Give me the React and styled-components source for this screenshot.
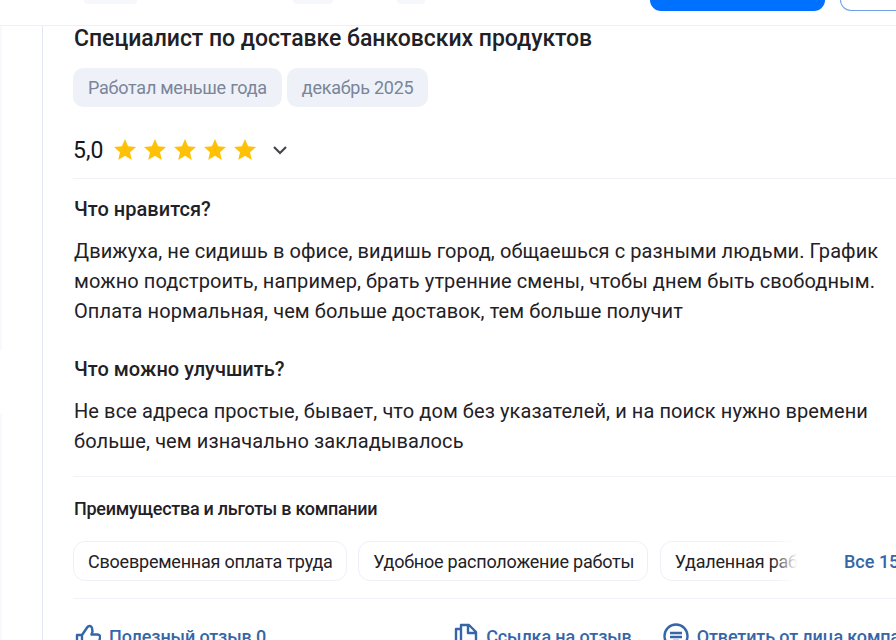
import React from 'react'
import styled, { createGlobalStyle } from 'styled-components'

const GlobalStyle = createGlobalStyle`
  html, body {
    margin: 0;
    padding: 0;
    height: 100%;
    overflow: hidden;
    background: #fff;
    font-family: Roboto, "Noto Sans", sans-serif;
  }
`

const Page = styled.div`
  width: 896px;
  height: 640px;
  overflow: hidden;
  display: flex;
  flex-direction: column;
`

const TopBar = styled.header`
  flex: none;
  height: 26px;
  box-sizing: border-box;
  border-bottom: 1px solid #eef0f8;
  display: flex;
  align-items: flex-start;
  padding-left: 84px;
`

const TabStub = styled.div`
  flex: none;
  width: ${p => p.$w}px;
  margin-left: ${p => p.$ml}px;
  height: 4px;
  background: #f6f7fb;
  border-radius: 0 0 8px 8px;
`

const PrimaryStub = styled.div`
  flex: none;
  width: 175px;
  height: 11px;
  margin-left: 225px;
  background: #0070ff;
  border-radius: 0 0 14px 14px;
`

const OutlineStub = styled.div`
  flex: none;
  width: 70px;
  height: 11px;
  margin-left: 15px;
  box-sizing: border-box;
  border: 1px solid #6f9fe8;
  border-top: 0;
  border-radius: 0 0 14px 14px;
`

const Body = styled.div`
  flex: 1;
  display: flex;
  min-height: 0;
`

const SideRail = styled.div`
  flex: none;
  width: 43px;
  box-sizing: border-box;
  border-right: 1px solid #e3e7f4;
  display: flex;
  flex-direction: column;
  gap: 62px;
`

const RailCard = styled.div`
  flex: none;
  width: 2px;
  height: ${p => p.$h}px;
  background: #f8f9fd;
  border-radius: 0 4px 4px 0;
`

const Card = styled.main`
  flex: none;
  width: 853px;
  box-sizing: border-box;
  padding: 0 0 0 30px;
`

const Title = styled.h2`
  margin: 0 0 0 1px;
  font-size: 23px;
  letter-spacing: -0.03px;
  line-height: 26px;
  font-weight: 500;
  color: #1f2126;
  white-space: nowrap;
`

const Tags = styled.div`
  display: flex;
  gap: 5px;
  margin-top: 16px;
`

const Tag = styled.span`
  height: 39px;
  box-sizing: border-box;
  padding: 0 15px;
  display: flex;
  align-items: center;
  font-size: 18px;
  letter-spacing: -0.25px;
  color: #7a8599;
  background: #eef1f8;
  border-radius: 10px;
`

const RatingRow = styled.div`
  display: flex;
  align-items: center;
  height: 28px;
  margin-top: 29px;
  padding-bottom: 14px;
  border-bottom: 1px solid #f1f2f8;
`

const Score = styled.span`
  flex: none;
  width: 41px;
  font-size: 23px;
  color: #14161a;
`

const Stars = styled.div`
  display: flex;
  gap: 8px;
`

const Chevron = styled.svg`
  margin-left: 16px;
`

const SectionTitle = styled.h3`
  margin: ${p => p.$mt}px 0 0 1px;
  font-size: 20px;
  letter-spacing: 0.03px;
  line-height: 26px;
  font-weight: 500;
  color: #1f2126;
`

const Paragraph = styled.p`
  margin: 14px 0 0 1px;
  font-size: 20px;
  letter-spacing: 0.09px;
  line-height: 30px;
  color: #1f2126;
  white-space: nowrap;
`

const Gap = styled.div`
  height: ${p => p.$h}px;
`

const Divider = styled.div`
  height: 1px;
  background: #f1f2f8;
`

const BenefitsTitle = styled.h4`
  margin: 21px 0 0 1px;
  font-size: 18px;
  letter-spacing: -0.28px;
  line-height: 21px;
  font-weight: 500;
  color: #1f2126;
`

const BenefitsRow = styled.div`
  display: flex;
  align-items: center;
  margin-top: 22px;
  height: 40px;
`

const ChipViewport = styled.div`
  width: 727px;
  flex: none;
  overflow: hidden;
  display: flex;
  gap: 11.5px;
  position: relative;
  &::after {
    content: '';
    position: absolute;
    top: 0;
    right: 0;
    bottom: 0;
    width: 28px;
    background: linear-gradient(to right, rgba(255, 255, 255, 0), #fff 90%);
  }
`

const Chip = styled.span`
  flex: none;
  height: 40px;
  box-sizing: border-box;
  padding: 1px 13px 0 14px;
  display: flex;
  align-items: center;
  font-size: 18px;
  letter-spacing: -0.22px;
  color: #1f2126;
  border: 1px solid #eef0f8;
  border-radius: 12px;
  white-space: nowrap;
`

const AllLink = styled.a`
  margin-left: 44px;
  font-size: 18px;
  font-weight: 500;
  color: #3566a8;
  white-space: nowrap;
`

const Actions = styled.div`
  display: flex;
  align-items: center;
  margin-top: 17px;
  padding-left: 2px;
  height: 40px;
`

const Action = styled.a`
  display: flex;
  align-items: center;
  flex: none;
  gap: ${p => p.$gap || 8}px;
  margin-left: ${p => p.$ml || 0}px;
  font-size: 18px;
  letter-spacing: -0.12px;
  font-weight: 500;
  color: #3566a8;
  white-space: nowrap;
`

function Star () {
  return (
    <svg width="22" height="22" viewBox="0 0 20 20">
      <path fill="#ffc107" d="M10 0L12.82 6.62 20 7.26 14.57 11.98 16.17 19 10 15.3 3.83 19 5.43 11.98 0 7.26 7.18 6.62z" />
    </svg>
  )
}

const benefits = ['Своевременная оплата труда', 'Удобное расположение работы', 'Удаленная работа']

export default function App () {
  return (
    <Page>
      <GlobalStyle />
      <TopBar>
        <TabStub $w={53} $ml={0} />
        <TabStub $w={40} $ml={156} />
        <TabStub $w={28} $ml={64} />
        <PrimaryStub />
        <OutlineStub />
      </TopBar>
      <Body>
        <SideRail>
          <RailCard $h={325} />
          <RailCard $h={300} />
        </SideRail>
        <Card>
          <Title>Специалист по доставке банковских продуктов</Title>
          <Tags>
            <Tag>Работал меньше года</Tag>
            <Tag>декабрь 2025</Tag>
          </Tags>
          <RatingRow>
            <Score>5,0</Score>
            <Stars>
              <Star /><Star /><Star /><Star /><Star />
            </Stars>
            <Chevron width="16" height="16" viewBox="0 0 16 16" fill="none" stroke="#44464c" strokeWidth="2.2">
              <path d="M2 5l6 6 6-6" />
            </Chevron>
          </RatingRow>
          <SectionTitle $mt={17}>Что нравится?</SectionTitle>
          <Paragraph>
            Движуха, не сидишь в офисе, видишь город, общаешься с разными людьми. График<br />
            можно подстроить, например, брать утренние смены, чтобы днем быть свободным.<br />
            Оплата нормальная, чем больше доставок, тем больше получит
          </Paragraph>
          <SectionTitle $mt={30}>Что можно улучшить?</SectionTitle>
          <Paragraph>
            Не все адреса простые, бывает, что дом без указателей, и на поиск нужно времени<br />
            больше, чем изначально закладывалось
          </Paragraph>
          <Gap $h={20} />
          <Divider />
          <BenefitsTitle>Преимущества и льготы в компании</BenefitsTitle>
          <BenefitsRow>
            <ChipViewport>
              {benefits.map(b => <Chip key={b}>{b}</Chip>)}
            </ChipViewport>
            <AllLink>Все 15</AllLink>
          </BenefitsRow>
          <Gap $h={17} />
          <Divider />
          <Actions>
            <Action>
              <svg width="26" height="26" viewBox="0 0 26 26" fill="none" stroke="#3566a8" strokeWidth="2.4" strokeLinejoin="round">
                <path d="M7 12v12H2V12zM7 12l5.5-8c1-1.500 4-1.500 4.500 1l.5 3.500-1 3h6c2 0 3 1.500 2.500 3.500l-2 7.500c-.5 1.500-1.500 2.500-3 2.500H7" />
              </svg>
              Полезный отзыв 0
            </Action>
            <Action $ml={187} $gap={7}>
              <svg width="26" height="26" viewBox="0 0 26 26" fill="none" stroke="#3566a8" strokeWidth="2.4" strokeLinejoin="round">
                <path d="M8 6H3v19h14v-3M8 2h8l7 7v13H8zM15 2v8h8" />
              </svg>
              Ссылка на отзыв
            </Action>
            <Action $ml={31}>
              <svg width="26" height="26" viewBox="0 0 26 26" fill="none" stroke="#3566a8" strokeWidth="2.4">
                <circle cx="13" cy="13" r="11.5" />
                <path d="M7 10h12M7 14h12M10 18h6" />
              </svg>
              Ответить от лица компании
            </Action>
          </Actions>
        </Card>
      </Body>
    </Page>
  )
}
